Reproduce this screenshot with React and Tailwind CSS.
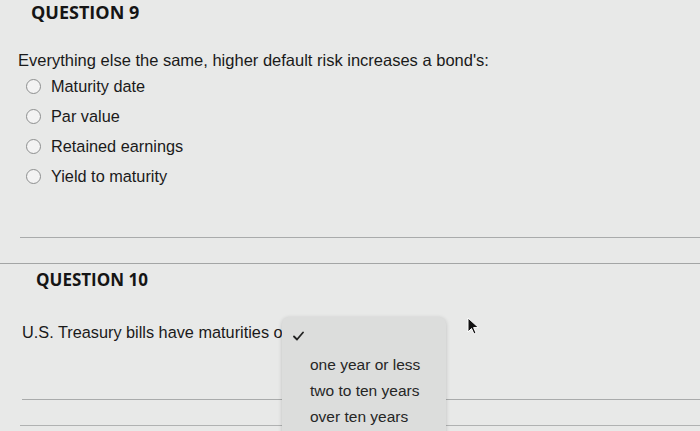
import React from "react";

const options = ["Maturity date", "Par value", "Retained earnings", "Yield to maturity"];
const choices = ["one year or less", "two to ten years", "over ten years"];

const Radio = () => (
  <span className="w-[15px] h-[15px] rounded-full border-[1.5px] border-[#8d8f8f] bg-[#f3f3f3] shrink-0" />
);

const App = () => {
  return (
    <div
      className="relative w-[700px] h-[431px] overflow-hidden bg-[#e8e9e8] text-[#1a1a1a]"
      style={{ fontFamily: '"Liberation Sans", Arial, sans-serif' }}
    >
      <h2
        className="pl-[31px] text-[18px] leading-[24px] font-bold text-[#151515]"
        style={{ fontFamily: '"Open Sans", sans-serif' }}
      >
        QUESTION 9
      </h2>

      <p className="mt-[25px] pl-[18px] text-[16.5px] leading-[22px]">
        Everything else the same, higher default risk increases a bond's:
      </p>

      <ul className="pl-[26px]">
        {options.map((o) => (
          <li key={o} className="flex items-center gap-[10px] h-[30px] text-[16.3px]">
            <Radio />
            <span>{o}</span>
          </li>
        ))}
      </ul>

      <div className="mt-[46px] ml-[20px] h-px bg-[#a9abab]" />
      <div className="mt-[25px] h-px bg-[#a3a5a5]" />

      <h2
        className="mt-[5px] pl-[36px] text-[17px] leading-[22px] font-bold text-[#151515]"
        style={{ fontFamily: '"Open Sans", sans-serif' }}
      >
        QUESTION 10
      </h2>

      <p className="mt-[31px] pl-[22px] text-[16.3px] leading-[20px]">
        U.S. Treasury bills have maturities o
      </p>

      <div className="mt-[57px] ml-[22px] h-px bg-[#a9abab]" />
      <div className="mt-[25px] ml-[20px] h-px bg-[#b0b2b2]" />

      {/* open select menu */}
      <div className="absolute left-[282px] top-[317px] w-[164px] h-[140px] rounded-[7px] bg-[#dcdddc] shadow-[0_1px_4px_rgba(0,0,0,0.18)] text-[15.5px] text-[#262626]">
        <svg className="absolute left-[11px] top-[14px]" width="11" height="10" viewBox="0 0 11 10">
          <path d="M1 5.5 L4 8.5 L10 1.5" fill="none" stroke="#222" strokeWidth="1.8" strokeLinecap="round" strokeLinejoin="round" />
        </svg>
        <div className="pt-[38px] pl-[28px] flex flex-col">
          {choices.map((c) => (
            <span key={c} className="h-[26px] leading-[20px]">
              {c}
            </span>
          ))}
        </div>
      </div>

      {/* mouse pointer */}
      <svg className="absolute left-[467px] top-[317px]" width="13" height="19" viewBox="0 0 13 19">
        <path d="M1 1 L1 15 L4.5 11.5 L7 17 L9 16 L6.6 10.6 L11.5 10.6 Z" fill="#111" stroke="#fff" strokeWidth="1" strokeLinejoin="round" />
      </svg>
    </div>
  );
};

export default App;
